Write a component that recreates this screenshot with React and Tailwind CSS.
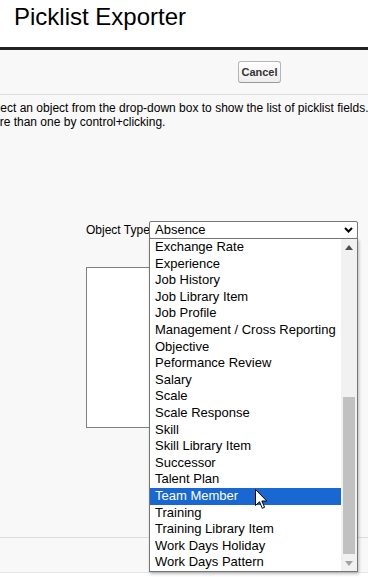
import React from 'react';

const options = [
    'Exchange Rate',
    'Experience',
    'Job History',
    'Job Library Item',
    'Job Profile',
    'Management / Cross Reporting',
    'Objective',
    'Peformance Review',
    'Salary',
    'Scale',
    'Scale Response',
    'Skill',
    'Skill Library Item',
    'Successor',
    'Talent Plan',
    'Team Member',
    'Training',
    'Training Library Item',
    'Work Days Holiday',
    'Work Days Pattern',
];

const Cursor = () => (
    <svg width="13" height="21" viewBox="0 0 13 21" className="absolute left-[105px] top-[1px] pointer-events-none">
        <path d="M0.5 0.5 L0.5 16.5 L4.5 12.8 L7.3 19.3 L9.6 18.3 L6.9 12 L11.8 12 Z" fill="#fff" stroke="#000" strokeWidth="1" strokeLinejoin="round" />
    </svg>
);

const Dropdown = () => (
    <div className="absolute left-0 top-[17px] z-10 w-[209px] h-[334px] border border-[#767676] bg-white shadow-[1px_2px_3px_rgba(0,0,0,0.25)] flex">
        <ul className="flex-1 min-w-0">
            {options.map((o) => (
                <li
                    key={o}
                    className={`relative h-[16.6px] leading-[16.6px] pl-[5px] text-[13px] whitespace-nowrap ${o === 'Team Member' ? 'bg-[#1967d2] text-white' : 'text-black'}`}
                >
                    {o}
                    {o === 'Team Member' && <Cursor />}
                </li>
            ))}
        </ul>
        {/* scrollbar */}
        <div className="w-[16px] bg-[#f1f1f1] flex flex-col items-center">
            <div className="h-[16px] w-full flex items-center justify-center">
                <svg width="8" height="5" viewBox="0 0 8 5"><path d="M0 5 L4 0 L8 5 Z" fill="#505050" /></svg>
            </div>
            <div className="flex-1 w-full px-[2px] flex flex-col">
                <div className="mt-[142px] h-[157px] bg-[#c1c1c1]" />
            </div>
            <div className="h-[16px] w-full flex items-center justify-center">
                <svg width="8" height="5" viewBox="0 0 8 5"><path d="M0 0 L8 0 L4 5 Z" fill="#a3a3a3" /></svg>
            </div>
        </div>
    </div>
);

export default function App() {
    return (
        <div className="w-[368px] h-[580px] overflow-hidden bg-white font-['Liberation_Sans',Arial,sans-serif] text-black">
            {/* Header */}
            <header className="h-[50px] border-b-[3px] border-[#222] pl-[14px] pt-[5px]">
                <h1 className="text-[24px] leading-[24px] text-black">Picklist Exporter</h1>
            </header>

            <div className="bg-[#f8f8f8]">
                {/* Button bar */}
                <div className="h-[45px] border-b border-[#dddddd] flex items-center pl-[238px]">
                    <button className="h-[22px] w-[43px] rounded-[3px] border border-[#b5b5b5] border-b-[#999] bg-gradient-to-b from-white to-[#ededed] text-[11px] font-bold text-[#333]">
                        Cancel
                    </button>
                </div>

                <div className="ml-[-17px] pt-[7px] text-[12px] leading-[13.5px] whitespace-nowrap">
                    <p>Select an object from the drop-down box to show the list of picklist fields.</p>
                    <p>more than one by control+clicking.</p>
                </div>

                {/* Form */}
                <div className="pl-[86px] pt-[92px]">
                    <div className="flex items-center h-[18px]">
                        <label className="w-[63px] text-[12px] whitespace-nowrap">Object Type</label>
                        <div className="relative">
                            <div className="w-[209px] h-[18px] border border-[#767676] rounded-[2px] bg-white flex items-center justify-between pl-[5px] pr-[4px] text-[13px]">
                                <span>Absence</span>
                                <svg width="9" height="6" viewBox="0 0 9 6">
                                    <path d="M1 1 L4.5 4.5 L8 1" fill="none" stroke="#000" strokeWidth="2" />
                                </svg>
                            </div>
                            <Dropdown />
                        </div>
                    </div>
                    <div className="mt-[28px] w-[170px] h-[161px] border border-[#808080] bg-white" />
                </div>

                {/* Footer rule */}
                <div className="mt-[109px] h-[36px] border-t border-b border-t-[#dcdcdc] border-b-[#e6e6e6]" />
            </div>
        </div>
    );
}
